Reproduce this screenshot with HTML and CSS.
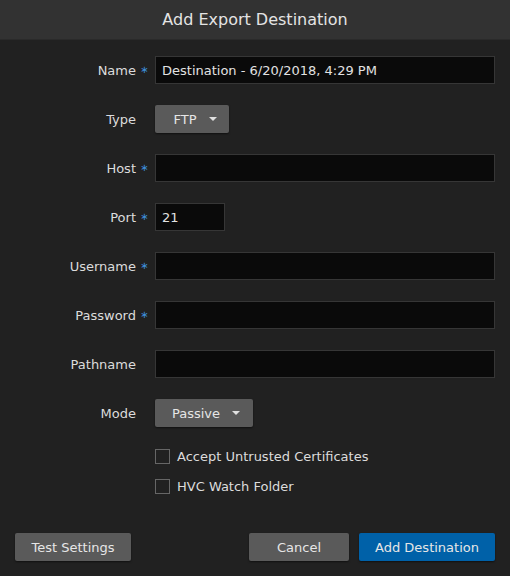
FILE: index.html
```html
<!DOCTYPE html>
<html>
<head>
<meta charset="utf-8">
<link rel="stylesheet" href="styles.css">
</head>
<body>
<div class="dialog">
  <div class="header">Add Export Destination</div>
  <div class="form">
    <div class="row"><label class="lbl req">Name</label><div class="input wide">Destination - 6/20/2018, 4:29 PM</div></div>
    <div class="row"><label class="lbl">Type</label><div class="select type">FTP<span class="caret"></span></div></div>
    <div class="row"><label class="lbl req">Host</label><div class="input wide"></div></div>
    <div class="row"><label class="lbl req">Port</label><div class="input port">21</div></div>
    <div class="row"><label class="lbl req">Username</label><div class="input wide"></div></div>
    <div class="row"><label class="lbl req">Password</label><div class="input wide"></div></div>
    <div class="row"><label class="lbl">Pathname</label><div class="input wide"></div></div>
    <div class="row"><label class="lbl">Mode</label><div class="select mode">Passive<span class="caret"></span></div></div>
    <div class="checks">
      <div class="check"><span class="box"></span>Accept Untrusted Certificates</div>
      <div class="check"><span class="box"></span>HVC Watch Folder</div>
    </div>
  </div>
  <div class="footer">
    <div class="btn test">Test Settings</div>
    <div class="right">
      <div class="btn cancel">Cancel</div>
      <div class="btn primary">Add Destination</div>
    </div>
  </div>
</div>
</body>
</html>
```
FILE: styles.css
```css
html, body { margin: 0; padding: 0; }
body {
  width: 510px; height: 576px; overflow: hidden;
  background: #212121;
  font-family: "DejaVu Sans", Verdana, sans-serif;
  font-size: 13px;
  color: #dcdcdc;
}
.dialog { display: flex; flex-direction: column; height: 576px; }
.header {
  height: 40px; box-sizing: border-box;
  background: #323232;
  border-bottom: 1px solid #2a2a2a;
  display: flex; align-items: center; justify-content: center;
  font-size: 16px; color: #e4e4e4;
}
.form { padding-top: 16px; }
.row { display: flex; align-items: center; height: 28px; margin-bottom: 21px; }
.lbl {
  width: 136px; text-align: right; position: relative; box-sizing: border-box;
  margin-right: 19px; color: #dcdcdc; font-size: 13px;
}
.req::after {
  content: "\2217"; color: #3d8fdc; position: absolute; left: 140px; top: 1px; font-size: 10px;
}
.input {
  height: 28px; box-sizing: border-box;
  background: #0a0a0a; border: 1px solid #363636;
  padding: 0 6px; display: flex; align-items: center;
  color: #e2e2e2; font-size: 13px;
}
.wide { width: 340px; }
.port { width: 70px; }
.select {
  height: 28px; box-sizing: border-box;
  background: #5a5a5a; border-radius: 2px;
  box-shadow: 0 1px 2px rgba(0,0,0,0.5);
  display: flex; align-items: center; justify-content: center;
  color: #e6e6e6; font-size: 13px;
}
.type { width: 74px; padding-left: 6px; }
.mode { width: 98px; padding-left: 4px; }
.caret {
  width: 0; height: 0;
  border-left: 4px solid transparent; border-right: 4px solid transparent;
  border-top: 4px solid #e0e0e0; margin-left: 12px;
}
.checks { padding-left: 155px; margin-top: 6px; display: flex; flex-direction: column; gap: 14px; }
.check { display: flex; align-items: center; height: 16px; font-size: 13px; color: #dcdcdc; }
.box {
  width: 15px; height: 15px; box-sizing: border-box;
  border: 1px solid #666; margin-right: 7px;
}
.footer {
  margin-top: auto; margin-bottom: 15px;
  display: flex; justify-content: space-between;
  padding: 0 15px;
}
.right { display: flex; gap: 10px; }
.btn {
  height: 28px; box-sizing: border-box;
  display: flex; align-items: center; justify-content: center;
  background: #5a5a5a; border-radius: 2px; color: #e6e6e6;
  box-shadow: 0 1px 2px rgba(0,0,0,0.5);
  font-size: 13px;
}
.test { width: 116px; }
.cancel { width: 100px; }
.primary { width: 136px; background: #0061a8; }
```
